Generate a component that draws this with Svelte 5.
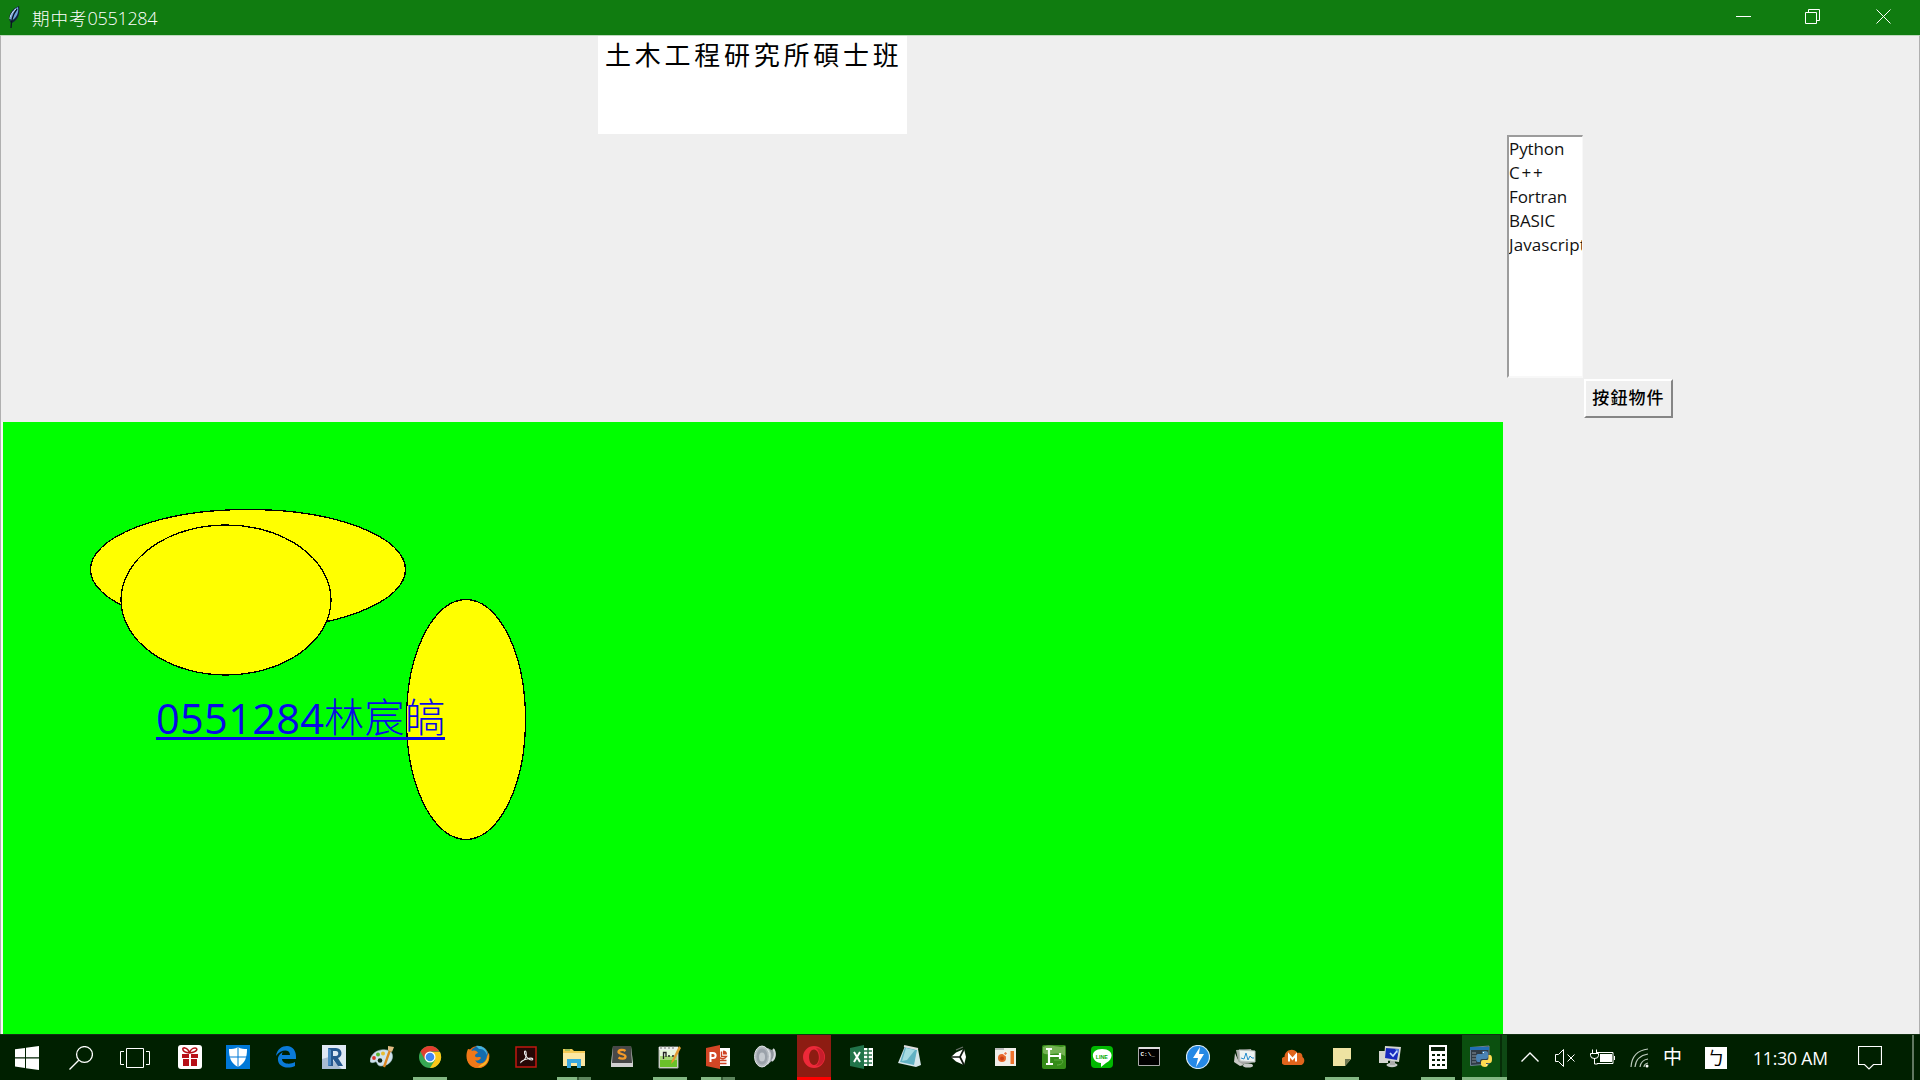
<script>
  const languages = ['Python', 'C++', 'Fortran', 'BASIC', 'Javascript'];
  const apps = [
    { id: 'gift' }, { id: 'defender' }, { id: 'edge' }, { id: 'revit' }, { id: 'paint' },
    { id: 'chrome', state: 'open' }, { id: 'firefox' }, { id: 'acrobat' },
    { id: 'explorer', state: 'multi' }, { id: 'sublime' }, { id: 'npp', state: 'open' },
    { id: 'ppt', state: 'multi' }, { id: 'volume' }, { id: 'opera', state: 'alert' },
    { id: 'excel' }, { id: 'notepad' }, { id: 'unity' }, { id: 'camera' }, { id: 'fortran' },
    { id: 'line' }, { id: 'cmd' }, { id: 'bolt' }, { id: 'monitor' }, { id: 'cloud' },
    { id: 'note', state: 'open' }, { id: 'remote' }, { id: 'calc', state: 'open' },
    { id: 'python', state: 'active' }
  ];
</script>

<div class="desktop">
  <header class="titlebar">
    <svg class="feather" width="16" height="24" viewBox="0 0 16 24">
      <path d="M5 23V18C1 13 4 4 13 1c1 7 0 13-7 17z" fill="#10233c" />
      <path d="M5 16C3 11 7 4 12 2c1 5-1 11-7 14z" fill="#6fa3dc" />
      <path d="M5 23C5 15 8 8 11 4" fill="none" stroke="#0b1520" stroke-width="1.3" />
      <path d="M4 14c0-4 3-8 6-10" fill="none" stroke="#d5e8fa" />
    </svg>
    <h1>期中考<span>0551284</span></h1>
    <div class="controls">
      <svg width="80" height="35" viewBox="0 0 80 35"><path d="M46 16.500h15" /></svg>
      <svg width="70" height="35" viewBox="0 0 70 35"><path d="M35.500 12.500h11v11h-11zM38.500 12.500v-3h11v11h-3" /></svg>
      <svg width="80" height="35" viewBox="0 0 80 35"><path d="M36.500 9.500l14 14M50.500 9.500l-14 14" /></svg>
    </div>
  </header>

  <main class="window">
    <div class="entry">土木工程研究所碩士班</div>
    <ul class="list">
      {#each languages as language}<li class:wide={language === 'C++'} class:bleed={language === 'Javascript'}>{language}</li>{/each}
    </ul>
    <button>按鈕物件</button>
    <svg class="canvas" width="1500" height="612" viewBox="3 422 1500 612">
      <g fill="#ff0" stroke="#000" stroke-width="1.3" shape-rendering="crispEdges">
        <ellipse cx="248" cy="569.5" rx="157.500" ry="60" />
        <ellipse cx="226" cy="600" rx="105" ry="75" />
        <ellipse cx="466" cy="719.500" rx="59.500" ry="120" />
      </g>
      <g fill="#0909e6">
        <text x="156" y="733.5" font-size="41.500" textLength="168" class="latin">0551284</text>
        <text x="324" y="732" font-size="40" textLength="121" class="cjk">林宸皜</text>
        <rect x="156" y="737" width="289" height="3" />
      </g>
    </svg>
  </main>

  <footer class="taskbar">
    <div class="system">
      <svg width="24" height="24" viewBox="0 0 24 24"><path fill="#fff" d="M0 3.300 10 2v9.300H0zM11 1.800 24 0v11.300H11zM0 12.500h10V22L0 20.600zM11 12.500h13V24l-13-1.800z" /></svg>
      <svg width="24" height="24" viewBox="0 0 24 24"><g fill="none" stroke="#fff" stroke-width="1.300"><circle cx="15.500" cy="8.500" r="7.900" /><path d="M9.700 14.200.5 23.500" /></g></svg>
      <svg width="30" height="24" viewBox="0 0 30 24"><path fill="none" stroke="#fff" d="M6.500 2.500h17v19h-17zM4 5.500H.5v13H4M26 5.500h3.500v13H26" /></svg>
    </div>
    <nav>
      {#each apps as { id, state }}
        <div class="app {state ?? ''}">
          <svg width="24" height="24" viewBox="0 0 24 24">
            {#if id === 'gift'}
              <rect width="24" height="24" rx="3" fill="#fff" /><path d="M4 9h7v4H4zm9 0h7v4h-7zM5 14h6v7H5zm8 0h6v7h-6z" fill="#b71018" /><path d="M11.500 8C3 7 4 2 7 3c2 .5 4 3 4.500 5C12 6 14 3 17 3c3 0 3 4-5.500 5z" fill="none" stroke="#b71018" stroke-width="1.600" />
            {:else if id === 'defender'}
              <path d="M0 0h24v24H0z" fill="#0078d7" /><path d="M12 2c3 2 6 2 9 2 0 9-2 14-9 18C5 18 3 13 3 4c3 0 6 0 9-2z" fill="#fff" /><path d="M12 1v22M2 12h20" stroke="#0078d7" />
            {:else if id === 'edge'}
              <path d="M2 11C3 4 8 1 13 1c6 0 9 5 9 11v2H8c0 5 8 6 13 3v4C12 25 3 21 4 13c.5-3 3-5 5-6-1 1-1 2-1 3h8c0-6-9-6-14 1z" fill="#0a7ad8" />
            {:else if id === 'revit'}
              <path d="M0 0h24v24H0z" fill="#dfe9f4" /><path d="M7 12 0 14v10h20z" fill="#a8bdd3" /><path d="M6 3h8c7 0 7 9 2 10l5 8h-5l-5-7v7H6z" fill="#24588f" /><path d="M11 6h3c3 0 3 5 0 5h-3z" fill="#dce8f4" /><path d="M6 3v18l3-1V5z" fill="#4c8bc5" />
            {:else if id === 'paint'}
              <path d="M0 16C1 5 15 2 21 7c4 5 0 14-10 14-5 0-3-5-6-4-2 1-5 1-5-1z" fill="#cfe2ed" stroke="#9fb9c6" stroke-width=".6" /><circle cx="4" cy="13" r="1.900" fill="#d9352a" /><circle cx="8" cy="9.500" r="2" fill="#5ab531" /><circle cx="13" cy="8.500" r="2" fill="#e7bd31" /><circle cx="10" cy="15.500" r="2.300" fill="#102011" /><path d="m20 5-6 17" stroke="#dd8623" stroke-width="2.300" /><path d="m18 1 6 1-2 5-4-2z" fill="#e2bb84" />
            {:else if id === 'chrome'}
              <circle cx="12" cy="12" r="11" fill="#36a852" /><path d="M12 12 2.500 6.500A11 11 0 0 1 21.500 6.500H12z" fill="#e33e2f" /><path d="M12 7h10a11 11 0 0 1-10 16l5-8z" fill="#fbc71a" /><path d="M2.500 6.500 7 15l2-5z" fill="#e33e2f" /><circle cx="12" cy="12" r="5.500" fill="#fff" /><circle cx="12" cy="12" r="4.300" fill="#4285f4" />
            {:else if id === 'firefox'}
              <circle cx="12" cy="12" r="11" fill="#e96a13" /><circle cx="13" cy="10" r="9" fill="#146cad" /><path d="M10 1c6-1 12 4 11 9-2-5-4-6-8-6z" fill="#43b5df" /><path d="M2 4c2 0 3 1 4 2 3-1 5 0 6 2-3 1-4 3-2 4 2 1 4-1 5 1-2 3-5 3-6 2 3 6 11 4 12-4l2-3c2 9-4 15-11 15C2 23-2 13 2 4z" fill="#ef7818" /><path d="M16 19c4-2 6-5 6-11 2 9-4 14-10 14z" fill="#f8bd29" />
            {:else if id === 'acrobat'}
              <path d="M2 2h20v20H2z" fill="#250705" stroke="#c01910" stroke-width="1.500" /><path d="M7 17c4-2 6-6 5-10-1-3-3 1 0 4 2 3 4 4 6 4 2-1 0-3-5-1-4 1-7 3-6 4" fill="none" stroke="#eee" stroke-width="1.100" />
            {:else if id === 'explorer'}
              <path d="M1 4h9l2 2h11v15H1z" fill="#f3ca55" /><path d="M1 8h22v13H1z" fill="#fbe7a2" /><path d="M5 23v-9h14v9h-4v-5H9v5z" fill="#3ba8df" /><path d="M3 5h5" stroke="#5da95b" />
            {:else if id === 'sublime'}
              <path d="M3 1h18l2 17v4H1v-4z" fill="#d1d1d1" /><path d="M3 1h18l1 17H2z" fill="#484848" /><path d="M15.500 6c-2-1.500-7-1.500-7 1s7 1.500 7 4.500-5 2.500-7 1" fill="none" stroke="#f49a28" stroke-width="2.300" />
            {:else if id === 'npp'}
              <path d="M1 2h19v21H1z" fill="#e7f7dc" stroke="#aaa" /><path d="M2 13h17v9H2z" fill="#6ac12a" /><path d="M2 11h17v4H2z" fill="#a7dc78" /><path d="M1 2h19v3H1z" fill="#eee" /><path d="M3 4V1m4 3V1m4 3V1m4 3V1" stroke="#777" /><path d="M5.500 14V7.500H8V12m2-1h2m2 0h2" fill="none" stroke="#222" stroke-width="1.300" /><path d="m21 1-7 14-1 4 3-3 7-13z" fill="#e39b32" />
            {:else if id === 'ppt'}
              <path d="M11 3h13v18H11z" fill="#fff" /><path d="M13 15.500h7.500m-7.500 3h7.500M15.500 6.500v5h5a4.500 4.500 0 0 1-7 1" fill="none" stroke="#cf4427" stroke-width="1.400" /><path d="M17 5.500a4 4 0 0 1 4 4h-4z" fill="#cf4427" /><path d="M0 3 14 0v24L0 21z" fill="#d24625" /><path d="M4.500 17V8H7c3.500 0 3.500 5 0 5H5" fill="none" stroke="#fff" stroke-width="2" />
            {:else if id === 'volume'}
              <path d="m8 1 10 4c5 1 5 10 0 11l-8 6z" fill="#8f959d" /><path d="M13 4c4 4 4 10 0 15" fill="none" stroke="#c6cacf" stroke-width="2.500" /><ellipse cx="8" cy="11.500" rx="7.500" ry="10.500" fill="#b4b9bf" stroke="#dfe3e6" /><ellipse cx="8" cy="11.500" rx="5.500" ry="8" fill="#9ba2aa" /><ellipse cx="8" cy="12" rx="3" ry="4.500" fill="#c5cacf" /><path d="M19 4c3 3 2 9-1 12" fill="none" stroke="#d5d8db" stroke-width="2" />
            {:else if id === 'opera'}
              <path fill="#ed2939" fill-rule="evenodd" d="M12 1a11 11 0 1 0 0 22 11 11 0 0 0 0-22zM12 4.500c6 0 7 15 0 15.500-6 0-7-15 0-15.500z" /><path d="M14 3c11 0 11 18 0 18 5-4 5-14 0-18z" fill="#c81d2c" />
            {:else if id === 'excel'}
              <path d="M12 3h11v18H12z" fill="#fff" /><path d="M13 6h9m-9 4h9m-9 4h9m-9 4h9M18 3v18" stroke="#26734a" stroke-width="1.500" /><path d="M0 3 14 0v24L0 21z" fill="#21744a" /><path d="m4 7 6 10M10 7 4 17" stroke="#fff" stroke-width="2" />
            {:else if id === 'notepad'}
              <path d="m7 1 13 3 3 16-5 2L0 18z" fill="#d5e5ea" /><path d="m7 2 12 3-3 15-14-3z" fill="#62b1c3" /><path d="m8 3 9 2-8 10-5 1z" fill="#a5dae2" /><path d="m6 1 14 3" stroke="#ddd" stroke-width="2" />
            {:else if id === 'unity'}
              <path d="m5 12 5-4.500 8-3.500 2 8-2 8-8-3.500z" fill="#fff" /><path d="M5 12h9l4-8m-4 8 4 8" fill="none" stroke="#101a10" stroke-width="1.700" /><path d="m10 5 7-3" stroke="#6a716a" stroke-width="1.200" />
            {:else if id === 'camera'}
              <path d="M1 3h21v18H1z" fill="#f0eee9" /><path d="M1 3h9v2H1z" fill="#bbb" /><circle cx="8" cy="13" r="4" fill="#e8682b" /><circle cx="8" cy="13.500" r="2" fill="#ce3f14" /><circle cx="11.500" cy="8.500" r="1.800" fill="#e77646" stroke="#fff" /><path d="M16.500 6H20v13h-3.500z" fill="#ed732d" />
            {:else if id === 'fortran'}
              <rect width="24" height="24" rx="2" fill="#358c18" /><path d="M1 2c9-4 15 2 22-1v10C13 5 7 12 1 8z" fill="#74b354" /><path d="M4 4h6M7 4v15M4 19h7M7 11h11M18 8v6" fill="none" stroke="#fff" stroke-width="2.200" /><path d="M12 15h8c2 2 0 5-5 5" fill="none" stroke="#61ac43" />
            {:else if id === 'line'}
              <rect x="1" y="1" width="22" height="22" rx="4" fill="#00b900" /><path d="M12 4c12 0 12 10 4 14l-5 4v-4C1 17-1 4 12 4z" fill="#fff" /><text x="5.800" y="13.500" class="tiny" fill="#00a900">LINE</text>
            {:else if id === 'cmd'}
              <path d="M.5 2.500h21v18H.5z" fill="#000" stroke="#aaa" /><path d="M1 2h21v2H1z" fill="#ddd" /><text x="2.500" y="11" class="mono" fill="#fff">C:\_</text>
            {:else if id === 'bolt'}
              <circle cx="12" cy="12" r="11.500" fill="#2589e5" stroke="#d7e9f4" stroke-width="1.200" /><path d="M14 2 7 13h5l-2 9 8-13h-5z" fill="#fff" />
            {:else if id === 'monitor'}
              <path d="m2 5 15-1 4 13-16 3z" fill="#a8a9a7" /><path d="m5 5 16 1v11l-15-1z" fill="#edf3f2" stroke="#bfc2c1" /><path d="m7 13 3 1 2-6 2 7 2-4 2 2h2" fill="none" stroke="#278dce" /><ellipse cx="14" cy="20.500" rx="5" ry="2" fill="#c8cbc8" /><path d="m1 8 4 9 5 3-4 1-6-4z" fill="#c9c9c6" />
            {:else if id === 'cloud'}
              <g transform="translate(-1.500 1)"><path d="M4 19c-5-1-4-8 0-8C4 4 13 1 17 7c4-1 5 2 5 4 3 2 2 7-1 8z" fill="#df651d" /><path d="M8.500 15.500V9l3.500 4 3.500-4v6.500" fill="none" stroke="#fff" stroke-width="2" /></g>
            {:else if id === 'note'}
              <path d="M3 3h18v11l-6 7H3z" fill="#eee3a2" /><path d="M21 14h-6v7z" fill="#6e7753" />
            {:else if id === 'remote'}
              <path d="M1 6h9v12H1zM7 1l16 1-2 15-15-2z" fill="#d4d5d1" /><path d="m8 3 13 1-2 11-12-2z" fill="#1729be" /><path d="m17 4 4 0-1 5z" fill="#5a7be0" /><path d="m12 8 3 3 4-5" stroke="#c9dcff" stroke-width="1.700" fill="none" /><ellipse cx="14" cy="20" rx="5.500" ry="2.200" fill="#c7cac9" /><path d="M12 16h5v4h-5z" fill="#aaa" />
            {:else if id === 'calc'}
              <path d="M3 0h18v24H3z" fill="#fff" /><path d="M5 2h14v4H5zM6 9h3v2H6zm5 0h3v2h-3zm5 0h3v2h-3zM6 14h3v2H6zm5 0h3v2h-3zm5 0h3v2h-3zM6 19h3v2H6zm5 0h3v2h-3zm5 0h3v2h-3z" fill="#082008" />
            {:else if id === 'python'}
              <path d="M.5 2.500 19 1v18L.5 20.500z" fill="#303b46" stroke="#6c8294" /><path d="M0 2h19v3H0z" fill="#226fb5" /><path d="M2 8h4m-4 3h5m-5 3h4m-4 3h4" stroke="#88949d" /><path d="M12 8V7q0-1 3-1t3 2v4q0 2-2 2h-4q-2 0-2 3H8q-2 0-2-4t2-4h5z" fill="#4a82b4" /><path d="M18.500 10H20q2 0 2 4t-2 4h-4v1h2q0 3-3 3t-4-2v-3q0-2 2-2h4q1.500 0 1.500-2z" fill="#ffd950" /><path d="M13 7.500h1m2 12.500h1" stroke="#fff" />
            {/if}
          </svg>
        </div>
      {/each}
    </nav>
    <div class="tray">
      <svg width="96" height="24" viewBox="1520 1045 96 24">
        <g fill="none" stroke="#fff"><path stroke-width="1.400" d="m1521.500 1060.500 8.500-8.500 8.500 8.500" /><path d="M1555.500 1053.500h3l5-5v17l-5-5h-3zM1567.500 1053.500l7 7m0-7-7 7" /><path d="M1597 1051.500h16v11h-16M1614.500 1055v4M1592.500 1048.500v4m4-4v4M1590.500 1052.500h8v2q0 3-4 3t-4-3zM1594.500 1057v6h3" /></g><path fill="#fff" d="M1600 1053h12v8h-12z" />
      </svg>
      <svg class="wifi" width="20" height="20" viewBox="0 0 20 20"><g fill="none" stroke="#bdcbbd" stroke-width="1.200"><path d="M1 19Q2 3 18 1M5 19Q6 8 18 6M10 19q1-7 8-8M14 19q0-3 4-4" /></g><circle cx="17" cy="18" r="1.500" fill="#fff" /></svg>
      <span class="ime">中</span>
      <span class="bopomofo">ㄅ</span>
      <time>11:30 AM</time>
      <svg class="action" width="24" height="25" viewBox="0 0 24 25"><path d="M.5 1.500h23v18h-8l-4.500 4.500-4.500-4.500h-6z" fill="none" stroke="#fff" stroke-width="1.200" /></svg>
      <i></i>
    </div>
  </footer>
</div>

<style>
  :global(body) { margin: 0; overflow: hidden; }
  * { box-sizing: border-box; }
  .desktop { width: 1920px; height: 1080px; display: grid; grid-template-rows: 35px 999px 46px; background: #efefef; font-family: "Open Sans", "Noto Sans CJK TC", sans-serif; }
  .titlebar { background: #107c10; display: flex; align-items: center; padding-left: 6px; color: #fff; }
  .feather { margin-top: -1px; }
  h1 { margin: 0 0 0 10px; font: 300 17.500px/30px "Noto Sans CJK TC", sans-serif; letter-spacing: 1px; white-space: nowrap; }
  h1 span { font: 300 18px "Open Sans", sans-serif; letter-spacing: -.3px; }
  .controls { display: flex; margin-left: auto; }
  .controls path { fill: none; stroke: #fff; }
  .window { display: grid; grid-template-columns: 1504px 77px 1fr; grid-template-rows: 99px 244px 43px 612px; border: 1px solid #b0b0b0; border-top-color: #bed9be; border-bottom: 0; }
  .entry { grid-column: 1; grid-row: 1; width: 309px; height: 98px; margin-left: 597px; padding-left: 7px; background: #fff; color: #000; font: 400 26px/35px "Noto Sans CJK TC", sans-serif; letter-spacing: 3.750px; white-space: nowrap; }
  .list { grid-column: 2; grid-row: 2; width: 76px; height: 243px; margin: 0 0 0 2px; padding: 0; list-style: none; overflow: hidden; background: #fff; border: solid #9c9c9c; border-width: 2px 1px 2px 2px; border-right-color: #f8f8f8; border-bottom-color: #f8f8f8; color: #111; font: 17px/24px "Open Sans", sans-serif; letter-spacing: -.1px; white-space: nowrap; }
  .list li.wide { letter-spacing: 1.800px; }
  .list li.bleed { letter-spacing: .1px; }
  button { grid-column: 3; grid-row: 3; width: 89px; height: 39px; margin: 0 0 0 2px; padding: 0 0 3px; border: 2px solid; border-color: #fff #858585 #858585 #fff; background: #efefef; color: #000; font: 500 17px/30px "Noto Sans CJK TC", sans-serif; letter-spacing: 1.100px; border-radius: 0; white-space: nowrap; }
  .canvas { grid-column: 1; grid-row: 4; margin-left: 2px; background: #0f0; box-shadow: -2px 0 #f7f7f7; }
  .latin { font-family: "Open Sans", sans-serif; }
  .cjk { font-family: "Noto Sans CJK TC", sans-serif; font-weight: 300; }
  .tiny { font: 700 5.300px "Liberation Sans", sans-serif; }
  .mono { font: 700 6px "Liberation Mono", monospace; }
  .taskbar { display: flex; background: #002000; border-top: 1px solid #123112; color: #fff; }
  .system { width: 166px; display: flex; align-items: center; padding-left: 15px; gap: 30px; }
  .system svg:last-child { margin-left: -3px; }
  nav { display: flex; width: 1341px; }
  .app { width: 34px; margin: 0 7px; flex: none; display: grid; place-items: center; border-bottom: 3px solid transparent; padding-top: 2px; }
  .open { border-bottom-color: #83b883; }
  .multi { border-bottom: 0; padding-bottom: 3px; background: linear-gradient(90deg, #83b883 20px, #355b35 20px 22px, #5c855c 22px) bottom / 100% 3px no-repeat; }
  .alert { background: #8d1c12; border-bottom-color: #f00; }
  .active { width: 45px; margin: 0; justify-items: start; padding-left: 8px; background: linear-gradient(90deg, #0b500f 38px, #062d08 38px 40px, #0e4814 40px); border-bottom-color: #83b883; }
  .tray { flex: 1; display: flex; align-items: center; padding-left: 13px; }
  .wifi { margin-left: 14px; }
  .ime { width: 20px; margin-left: 13px; margin-top: -3px; font: 19px/24px "Noto Sans CJK TC", sans-serif; }
  .bopomofo { width: 22px; height: 22px; margin-left: 22px; background: #fff; color: #000; text-align: center; font: 18px/21px "Noto Sans CJK TC", sans-serif; }
  time { width: 78px; margin-left: 26px; font: 17.500px/24px "Open Sans", sans-serif; letter-spacing: -.15px; white-space: nowrap; }
  .action { margin-left: 27px; }
  .tray i { width: 2px; height: 46px; margin-left: auto; margin-right: 6px; background: #607760; }
</style>
